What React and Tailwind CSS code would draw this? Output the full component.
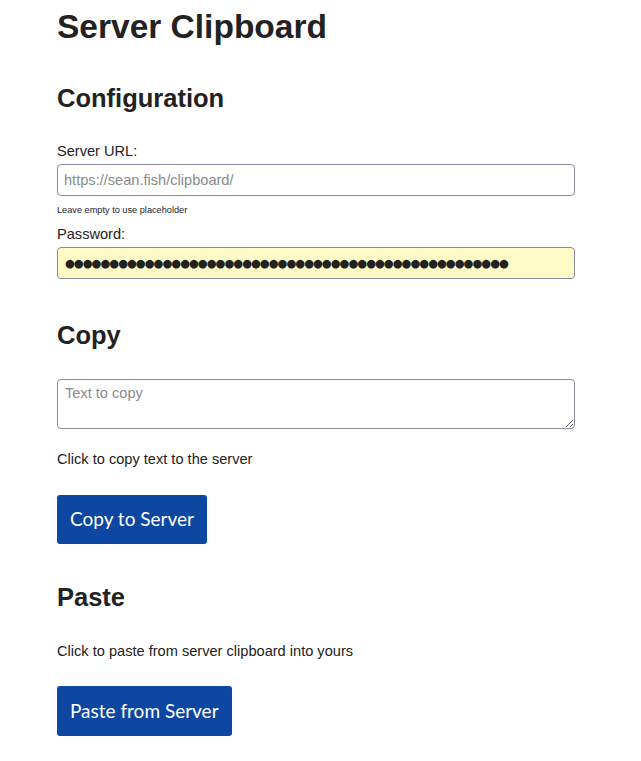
import { useState } from "react";

export default function App() {
  const [url, setUrl] = useState("");
  const [password, setPassword] = useState("●".repeat(50));
  const [text, setText] = useState("");

  return (
    <div className="min-h-screen bg-white text-[#222] font-['Liberation_Sans',Arial,sans-serif]">
      <div className="w-[518px] ml-[57px] pt-[8px] pb-10">
        <h1 className="text-[33.5px] font-bold leading-[38px]">Server Clipboard</h1>

        {/* Configuration */}
        <h2 className="mt-[38px] text-[25.5px] font-bold leading-[29px]">Configuration</h2>
        <label className="block mt-[30px] text-[14.6px] leading-[17px]">Server URL:</label>
        <input
          type="text"
          value={url}
          onChange={(e) => setUrl(e.target.value)}
          placeholder="https://sean.fish/clipboard/"
          className="block mt-[4px] w-full h-[32px] px-[6px] text-[14.6px] border border-[#8a8aa3] rounded-[4px] outline-none placeholder:text-[#8a8a8a]"
        />
        <p className="mt-[9px] text-[9.2px] leading-[11px]">Leave empty to use placeholder</p>
        <label className="block mt-[10px] text-[14.6px] leading-[17px]">Password:</label>
        <input
          type="text"
          value={password}
          onChange={(e) => setPassword(e.target.value)}
          className="block mt-[4px] w-full h-[32px] px-[7px] text-[11.3px] tracking-[-1px] font-['DejaVu_Sans',sans-serif] text-[#222] bg-[#fffbc7] border border-[#8a8aa3] rounded-[4px] outline-none"
        />

        {/* Copy */}
        <h2 className="mt-[42px] text-[25.5px] font-bold leading-[29px]">Copy</h2>
        <textarea
          value={text}
          onChange={(e) => setText(e.target.value)}
          placeholder="Text to copy"
          className="block mt-[29px] w-full h-[50px] px-[7px] py-[5px] text-[14.6px] leading-[17px] border border-[#8a8aa3] rounded-[4px] outline-none placeholder:text-[#8a8a8a]"
        />
        <p className="mt-[22px] text-[14.6px] leading-[17px]">Click to copy text to the server</p>
        <button className="block mt-[27px] h-[49px] px-[13px] bg-[#0e47a1] text-white rounded-[3px] text-[19px] font-['Lato',sans-serif]">
          Copy to Server
        </button>

        {/* Paste */}
        <h2 className="mt-[39px] text-[25.5px] font-bold leading-[29px]">Paste</h2>
        <p className="mt-[31px] text-[14.6px] leading-[17px]">Click to paste from server clipboard into yours</p>
        <button className="block mt-[26px] h-[50px] px-[13px] bg-[#0e47a1] text-white rounded-[3px] text-[19px] font-['Lato',sans-serif]">
          Paste from Server
        </button>
      </div>
    </div>
  );
}
